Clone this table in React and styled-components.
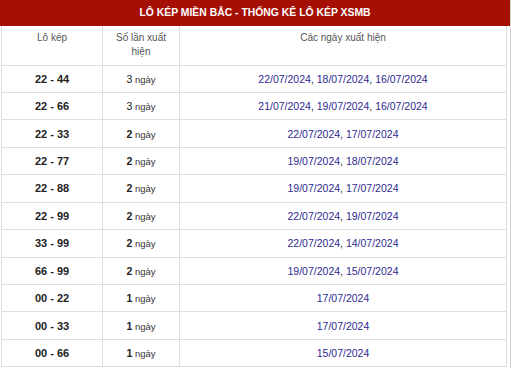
import React from 'react';
import styled, { createGlobalStyle } from 'styled-components';

const GlobalStyle = createGlobalStyle`
    html, body {
        margin: 0;
        padding: 0;
        background: #fff;
    }
    body {
        font-family: "Liberation Sans", Arial, sans-serif;
    }
`;

const Wrapper = styled.div`
    width: 510px;
    height: 368px;
    border-right: 1px solid #cfcfcf;
    overflow: hidden;
`;

const Title = styled.div`
    height: 26px;
    background: #a50f04;
    color: #fff;
    font-weight: bold;
    font-size: 10.4px;
    line-height: 26px;
    text-align: center;
`;

const Table = styled.table`
    margin-left: 1px;
    width: 506px;
    border-collapse: collapse;
    table-layout: fixed;
`;

const HeadCell = styled.th`
    height: 39px;
    box-sizing: border-box;
    padding: 5px 12px 0;
    vertical-align: top;
    font-weight: normal;
    font-size: 10px;
    line-height: 14px;
    color: #555;
    border: 1px solid #dedede;
    border-top: none;
`;

const Cell = styled.td`
    height: 27.45px;
    box-sizing: border-box;
    padding: 0 4px;
    text-align: center;
    vertical-align: middle;
    border: 1px solid #dedede;
    color: #333;
    font-size: 9.5px;
`;

const Pair = styled.span`
    font-weight: bold;
    font-size: 11px;
    color: #222;
`;

const Count = styled.span`
    font-weight: ${p => (p.$plain ? 'normal' : 'bold')};
    font-size: 10.5px;
    color: #222;
`;

const Dates = styled.span`
    font-size: 10.5px;
    color: #333;
`;

const DateLink = styled.span`
    color: #2d2a90;
`;

const rows = [
    ['22 - 44', 3, ['22/07/2024', '18/07/2024', '16/07/2024']],
    ['22 - 66', 3, ['21/07/2024', '19/07/2024', '16/07/2024']],
    ['22 - 33', 2, ['22/07/2024', '17/07/2024']],
    ['22 - 77', 2, ['19/07/2024', '18/07/2024']],
    ['22 - 88', 2, ['19/07/2024', '17/07/2024']],
    ['22 - 99', 2, ['22/07/2024', '19/07/2024']],
    ['33 - 99', 2, ['22/07/2024', '14/07/2024']],
    ['66 - 99', 2, ['19/07/2024', '15/07/2024']],
    ['00 - 22', 1, ['17/07/2024']],
    ['00 - 33', 1, ['17/07/2024']],
    ['00 - 66', 1, ['15/07/2024']],
];

export default function App() {
    return (
        <>
            <GlobalStyle />
            <Wrapper>
                <Title>LÔ KÉP MIỀN BẮC - THỐNG KÊ LÔ KÉP XSMB</Title>
                <Table>
                    <colgroup>
                        <col style={{ width: 101 }} />
                        <col style={{ width: 77 }} />
                        <col />
                    </colgroup>
                    <thead>
                        <tr>
                            <HeadCell>Lô kép</HeadCell>
                            <HeadCell>Số lần xuất hiện</HeadCell>
                            <HeadCell>Các ngày xuất hiện</HeadCell>
                        </tr>
                    </thead>
                    <tbody>
                        {rows.map(([pair, count, dates]) => (
                            <tr key={pair}>
                                <Cell><Pair>{pair}</Pair></Cell>
                                <Cell><Count $plain={count > 2}>{count}</Count> ngày</Cell>
                                <Cell>
                                    <Dates>
                                        {dates.map((d, i) => (
                                            <React.Fragment key={d}>
                                                {i > 0 && ', '}
                                                <DateLink>{d}</DateLink>
                                            </React.Fragment>
                                        ))}
                                    </Dates>
                                </Cell>
                            </tr>
                        ))}
                    </tbody>
                </Table>
            </Wrapper>
        </>
    );
}
